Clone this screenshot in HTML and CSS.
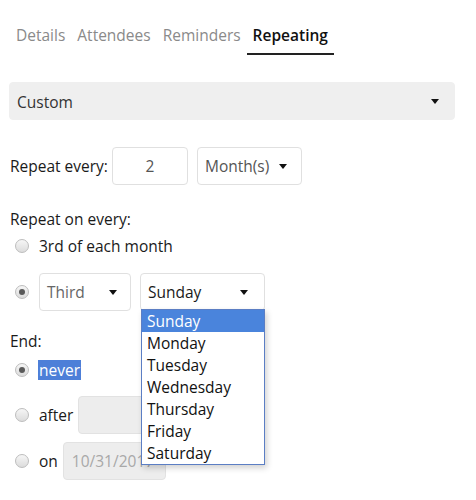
FILE: index.html
```html
<!DOCTYPE html>
<html>
<head>
<meta charset="utf-8">
<link rel="stylesheet" href="styles.css">
</head>
<body>
<div class="page">
  <nav class="tabs">
    <span class="tab">Details</span>
    <span class="tab">Attendees</span>
    <span class="tab">Reminders</span>
    <span class="tab active">Repeating</span>
  </nav>

  <div class="select wide"><span>Custom</span><i class="caret"></i></div>

  <div class="row every">
    <span class="label">Repeat every:</span>
    <div class="field num">2</div>
    <div class="select month"><span>Month(s)</span><i class="caret"></i></div>
  </div>

  <div class="heading on-every">Repeat on every:</div>
  <div class="row radio-row r1">
    <span class="radio"></span><span class="text">3rd of each month</span>
  </div>
  <div class="row radio-row r2">
    <span class="radio checked"></span>
    <div class="select third"><span>Third</span><i class="caret"></i></div>
    <div class="day-wrap">
      <div class="select day"><span class="dark">Sunday</span><i class="caret"></i></div>
      <ul class="menu">
        <li class="sel">Sunday</li>
        <li>Monday</li>
        <li>Tuesday</li>
        <li>Wednesday</li>
        <li>Thursday</li>
        <li>Friday</li>
        <li>Saturday</li>
      </ul>
    </div>
  </div>

  <div class="heading end">End:</div>
  <div class="row radio-row r-never">
    <span class="radio checked"></span><span class="text hl">never</span>
  </div>
  <div class="row radio-row r-after">
    <span class="radio"></span><span class="text">after</span>
    <div class="field disabled after-box"></div>
  </div>
  <div class="row radio-row r-on">
    <span class="radio"></span><span class="text">on</span>
    <div class="field disabled date">10/31/2017</div>
  </div>
</div>
</body>
</html>
```
FILE: styles.css
```css
* { box-sizing: border-box; }
html, body { margin: 0; padding: 0; background: #fff; }
body {
  font-family: "Open Sans", "Noto Sans", sans-serif;
  font-size: 15.5px;
  color: #1a1a1a;
  width: 476px;
  height: 500px;
  overflow: hidden;
}
.page { padding: 0 21px 0 9px; }

.tabs {
  display: flex;
  padding-top: 25px;
  padding-left: 1px;
}
.tab {
  padding: 0 6px 7px;
  line-height: 21px;
  color: #8a8a8a;
  border-bottom: 2px solid transparent;
}
.tab.active {
  color: #111;
  font-weight: 600;
  border-bottom-color: #222;
}

.select {
  display: flex;
  align-items: center;
  justify-content: space-between;
  height: 38px;
  border: 1px solid #e0e0e0;
  border-radius: 4px;
  background: #fff;
  padding: 0 12px 0 7px;
  color: #666;
}
.select .dark { color: #1a1a1a; }
.caret {
  width: 0; height: 0;
  border-left: 4.5px solid transparent;
  border-right: 4.5px solid transparent;
  border-top: 5px solid #111;
}
.select.wide {
  margin-top: 27px;
  background: #efefef;
  border-color: #efefef;
  color: #333;
  padding-right: 15px;
}
.select.wide span { padding-top: 1px; }

.row { display: flex; align-items: center; }
.every { margin-top: 27px; }
.label { margin-left: 1px; margin-right: 4px; }
.field {
  height: 38px;
  border: 1px solid #e0e0e0;
  border-radius: 4px;
  display: flex;
  align-items: center;
}
.num { width: 76px; justify-content: center; color: #555; }
.month { width: 105px; margin-left: 9px; padding-right: 14px; color: #555; }

.heading { line-height: 20px; margin-left: 1px; }
.on-every { margin-top: 24px; }
.r1 { margin-top: 7px; height: 20px; }
.r2 { margin-top: 17px; }

.radio {
  width: 14px; height: 14px;
  border-radius: 50%;
  border: 1px solid #bdbdbd;
  background: linear-gradient(#f6f6f6, #dcdcdc);
  margin-left: 6px;
  margin-right: 10px;
  position: relative;
  flex: none;
}
.radio.checked::after {
  content: "";
  position: absolute;
  left: 3px; top: 3px;
  width: 6px; height: 6px;
  border-radius: 50%;
  background: #5a5a5a;
}
.third { width: 92px; padding-right: 13px; }
.day-wrap { position: relative; margin-left: 9px; }
.day { width: 125px; padding-right: 16px; }
.menu {
  position: absolute;
  left: 1px; top: 36px;
  width: 124px;
  margin: 0; padding: 0;
  list-style: none;
  background: #fff;
  border: 1px solid #5b7ec4;
  box-shadow: 2px 3px 6px rgba(0,0,0,0.18);
  z-index: 5;
}
.menu li {
  height: 22px;
  line-height: 22px;
  padding-left: 5px;
  color: #111;
}
.menu li.sel { background: #4a84dc; color: #fff; }

.end { margin-top: 20px; }
.r-never { margin-top: 9px; height: 20px; }
.hl { background: #4d7fd8; color: #fff; padding: 0 1px; line-height: 20px; margin-left: -1px;}
.r-after { margin-top: 16px; }
.r-after .text { margin-right: 5px; }
.disabled { background: #ededed; border-color: #e2e2e2; }
.after-box { width: 110px; }
.r-on { margin-top: 8px; }
.r-on .text { margin-right: 5px; }
.date {
  width: 103px;
  padding-left: 8px;
  color: #a8a8a8;
  overflow: hidden;
  white-space: nowrap;
}
```
